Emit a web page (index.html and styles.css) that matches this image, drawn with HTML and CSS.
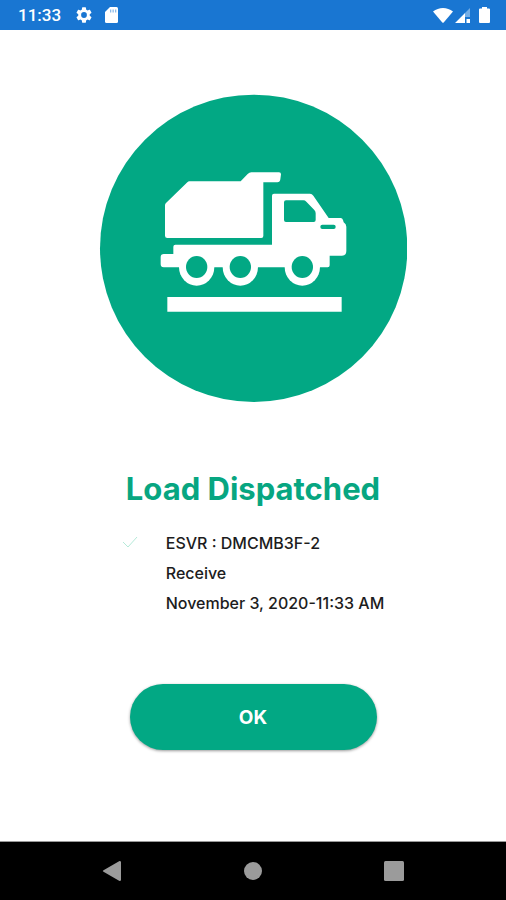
FILE: index.html
```html
<!DOCTYPE html>
<html lang="en">
<head>
<meta charset="utf-8">
<meta name="viewport" content="width=device-width, initial-scale=1">
<title>Load Dispatched</title>
<link rel="stylesheet" href="styles.css">
</head>
<body>
<header class="status">
  <span class="time">11:33</span>
  <svg class="gear" viewBox="2 2 20 20" aria-hidden="true"><path d="M19.14 12.94c.04-.3.06-.61.06-.94s-.02-.64-.07-.94l2.03-1.58a.49.49 0 0 0 .12-.61l-1.92-3.32a.49.49 0 0 0-.59-.22l-2.39.96c-.5-.38-1.03-.7-1.62-.94L14.4 2.81a.48.48 0 0 0-.48-.41h-3.84a.47.47 0 0 0-.47.41l-.36 2.54c-.59.24-1.13.57-1.62.94l-2.39-.96a.48.48 0 0 0-.59.22L2.74 8.87a.47.47 0 0 0 .12.61l2.03 1.58c-.05.3-.09.63-.09.94s.02.64.07.94l-2.03 1.58a.49.49 0 0 0-.12.61l1.92 3.32c.12.22.37.29.59.22l2.39-.96c.5.38 1.03.7 1.62.94l.36 2.54c.05.24.24.41.48.41h3.84c.24 0 .44-.17.47-.41l.36-2.54c.59-.24 1.13-.56 1.62-.94l2.39.96c.22.08.47 0 .59-.22l1.92-3.32a.47.47 0 0 0-.12-.61zM12 15.6a3.6 3.6 0 1 1 0-7.2 3.6 3.6 0 0 1 0 7.2z"/></svg>
  <svg class="card" viewBox="0 0 13 16" aria-hidden="true"><path d="M5 0h6.500Q13 0 13 1.500v13Q13 16 11.500 16h-10Q0 16 0 14.500V5z"/><path class="pins" d="M5 2.500h1.300v3H5zM7.500 2.500h1.300v3H7.500zM10 2.500h1.300v3H10z"/></svg>
  <span class="signals">
    <svg class="wifi" viewBox="0 0 20 15" aria-hidden="true"><path d="M0 3.500Q4.500 0 10 0t10 3.500L10.700 14.500Q10 15.200 9.300 14.500z"/></svg>
    <svg class="cell" viewBox="0 0 15 15" aria-hidden="true"><path class="faint" d="M15 0v9H10v-4z"/><path d="M0 15 10 5v10zM11.500 11H15v4h-3.500z"/></svg>
    <svg class="battery" viewBox="0 0 11 16" aria-hidden="true"><path d="M3 0h5v1.500h2q1 0 1 1V15q0 1-1 1H1q-1 0-1-1V2.500q0-1 1-1h2z"/></svg>
  </span>
</header>
<main class="content">
  <svg class="badge" viewBox="-153 -198 924 924" role="img" aria-label="Dump truck">
    <circle class="green" cx="311" cy="265" r="461"/>
    <path d="M118 64H272L293 42Q298 37 304 37H387Q393 37 393 43L391 58Q390 67 382 67H340V228Q340 234 334 234H52Q45 234 45 227V136Q45 132 48 129L112 67Q115 64 118 64Z"/>
    <path d="M70 260Q70 254 76 254H366V107Q366 101 372 101H480Q486 101 490 107L536 174H572Q577 174 579 180L581 187Q589 192 589 200V273Q589 287 576 287H539V316Q539 322 533 322H41Q32 322 32 313V291Q32 282 41 282H70Z"/>
    <ellipse cx="140" cy="321" rx="53" ry="56"/>
    <ellipse cx="271" cy="321" rx="53" ry="56"/>
    <ellipse cx="457" cy="321" rx="53" ry="56"/>
    <path class="green" d="M408 121H460Q465 121 469 125L493 150Q497 154 497 160V180Q497 186 491 186H408Q402 186 402 180V127Q402 121 408 121Z"/>
    <rect class="green" x="511" y="194" width="46" height="13" rx="6"/>
    <ellipse class="green" cx="140" cy="321" rx="32" ry="33"/>
    <ellipse class="green" cx="271" cy="321" rx="32" ry="33"/>
    <ellipse class="green" cx="457" cy="321" rx="32" ry="33"/>
    <path d="M52 411H575V455H52z"/>
  </svg>
  <h1 class="title">Load Dispatched</h1>
  <div class="details">
    <svg class="check" viewBox="0 0 16 12" aria-hidden="true"><path d="M1 6l5 5L15 1"/></svg>
    <div class="lines">
      <p>ESVR : DMCMB3F-2</p>
      <p>Receive</p>
      <p>November 3, 2020-11:33 AM</p>
    </div>
  </div>
  <button class="ok" type="button">OK</button>
</main>
<nav class="navbar" aria-label="System">
  <button type="button" aria-label="Back"><svg viewBox="0 0 20 20"><path d="M1.500 9.200 17.500 0Q19 0 19 1v18q0 1-1.500 1L1.500 10.800Q0 10 1.500 9.200z"/></svg></button>
  <button type="button" aria-label="Home"><svg viewBox="0 0 20 20"><circle cx="10" cy="10" r="9"/></svg></button>
  <button type="button" aria-label="Recent apps"><svg viewBox="0 0 20 20"><rect width="20" height="20" rx="1.500"/></svg></button>
</nav>
</body>
</html>
```
FILE: styles.css
```css
* {
  box-sizing: border-box;
}

body {
  margin: 0;
  min-height: 100vh;
  display: flex;
  flex-direction: column;
  background: #fff;
  color: #1c1c20;
  font-family: Inter, "Open Sans", sans-serif;
}

.status {
  display: flex;
  align-items: center;
  height: 30px;
  padding: 0 16px 0 18px;
  background: #1976d2;
  color: #fff;
}

.status svg {
  fill: #fff;
}

.time {
  font: 500 17px/30px Roboto, sans-serif;
}

.gear {
  width: 16px;
  height: 16px;
  margin-left: 15px;
}

.card {
  width: 13px;
  height: 16px;
  margin-left: 13px;
}

.status .pins {
  fill: #8dbbe9;
}

.signals {
  display: flex;
  align-items: center;
  margin-left: auto;
}

.wifi {
  width: 20px;
  height: 15px;
}

.cell {
  width: 15px;
  height: 15px;
  margin-left: 2px;
}

.status .faint {
  fill: #75aee6;
}

.battery {
  width: 11px;
  height: 16px;
  margin-left: 9px;
}

.content {
  flex: 1;
  display: flex;
  flex-direction: column;
  align-items: center;
  padding: 64px 16px 32px;
}

.badge {
  width: 308px;
  max-width: 100%;
  fill: #fff;
}

.badge .green {
  fill: #02a884;
}

.title {
  margin: 68px 0 0;
  color: #07a681;
  font-size: 31px;
  line-height: 38px;
  font-weight: 700;
}

.details {
  display: flex;
  gap: 28px;
  margin-top: 20px;
}

.check {
  width: 16px;
  height: 12px;
  margin-top: 8px;
  fill: none;
  stroke: #b5ead9;
  stroke-width: 1;
}

.lines p {
  margin: 0;
  font-size: 16px;
  line-height: 30px;
  font-weight: 500;
}

.ok {
  width: 50%;
  min-width: 247px;
  height: 66px;
  margin-top: 66px;
  padding: 2px 0 0;
  border: 0;
  border-radius: 33px;
  background: #02a884;
  box-shadow: 0 1px 3px rgba(0, 0, 0, 0.4);
  color: #fff;
  font: 700 19px/24px Inter, "Open Sans", sans-serif;
}

.navbar {
  display: grid;
  grid-template-columns: repeat(3, 1fr);
  height: 59px;
  padding: 0 42px;
  background: #000;
  border-top: 1px solid #999;
}

.navbar button {
  display: flex;
  align-items: center;
  justify-content: center;
  padding: 0;
  border: 0;
  background: none;
}

.navbar svg {
  width: 20px;
  height: 20px;
  fill: #9b9b9b;
}
```
